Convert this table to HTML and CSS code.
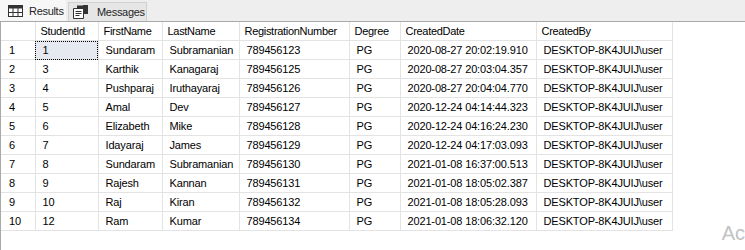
FILE: index.html
```html
<!DOCTYPE html>
<html lang="en">
<head>
    <meta charset="UTF-8">
    <title>Results</title>
    <link rel="stylesheet" href="styles.css">
</head>
<body>
    <div class="tabs">
        <div class="tab active">
            <svg width="15" height="12" viewBox="0 0 15 12">
                <rect x="0.5" y="0.5" width="14" height="11" fill="#fff" stroke="#333"/>
                <rect x="0.5" y="0.5" width="14" height="3" fill="#333"/>
                <path d="M5 0.5V11.5M10 0.5V11.5M0.5 7.5H14.5" stroke="#333" fill="none"/>
            </svg>
            <span>Results</span>
        </div>
        <div class="tab">
            <svg width="16" height="14" viewBox="0 0 16 14">
                <path d="M0.5 3.5H10.5V13.5H0.5Z" fill="#fff" stroke="#333"/>
                <path d="M2.5 6.5H8.5M2.5 8.5H8.5M2.5 10.5H6.5" stroke="#333"/>
                <rect x="10" y="0" width="5" height="9" fill="#333"/>
                <rect x="4" y="0.5" width="6" height="3" fill="#333"/>
            </svg>
            <span>Messages</span>
        </div>
    </div>
    <div class="grid">
        <table>
            <colgroup>
                <col style="width:34px">
                <col style="width:63px">
                <col style="width:64px">
                <col style="width:77px">
                <col style="width:110px">
                <col style="width:51px">
                <col style="width:136px">
                <col style="width:136px">
            </colgroup>
            <thead>
                <tr>
                    <th></th><th>StudentId</th><th>FirstName</th><th>LastName</th><th>RegistrationNumber</th><th>Degree</th><th>CreatedDate</th><th>CreatedBy</th>
                </tr>
            </thead>
            <tbody id="rows"></tbody>
        </table>
        <div class="watermark">Ac</div>
    </div>

    <script>
        const data = [
            [1, 'Sundaram', 'Subramanian', '789456123', '2020-08-27 20:02:19.910'],
            [3, 'Karthik', 'Kanagaraj', '789456125', '2020-08-27 20:03:04.357'],
            [4, 'Pushparaj', 'Iruthayaraj', '789456126', '2020-08-27 20:04:04.770'],
            [5, 'Amal', 'Dev', '789456127', '2020-12-24 04:14:44.323'],
            [6, 'Elizabeth', 'Mike', '789456128', '2020-12-24 04:16:24.230'],
            [7, 'Idayaraj', 'James', '789456129', '2020-12-24 04:17:03.093'],
            [8, 'Sundaram', 'Subramanian', '789456130', '2021-01-08 16:37:00.513'],
            [9, 'Rajesh', 'Kannan', '789456131', '2021-01-08 18:05:02.387'],
            [10, 'Raj', 'Kiran', '789456132', '2021-01-08 18:05:28.093'],
            [12, 'Ram', 'Kumar', '789456134', '2021-01-08 18:06:32.120']
        ];
        const tbody = document.getElementById('rows');
        data.forEach((r, i) => {
            const tr = document.createElement('tr');
            tr.innerHTML = `
                <td class="num">${i + 1}</td>
                <td class="${i === 0 ? 'selected' : ''}">${r[0]}</td>
                <td>${r[1]}</td>
                <td>${r[2]}</td>
                <td>${r[3]}</td>
                <td>PG</td>
                <td>${r[4]}</td>
                <td>DESKTOP-8K4JUIJ\\user</td>
            `;
            tbody.appendChild(tr);
        });
    </script>
</body>
</html>
```

FILE: styles.css
```css
body {
    margin: 0;
    font-family: 'Liberation Sans', Arial, sans-serif;
    font-size: 11px;
    color: #000;
    background: #fff;
    width: 745px;
    height: 250px;
    overflow: hidden;
}
.tabs {
    display: flex;
    align-items: flex-end;
    height: 22px;
    background: #eeeeee;
    border-bottom: 1px solid #a9a9a9;
    box-sizing: border-box;
}
.tab {
    display: flex;
    align-items: center;
    gap: 8px;
    flex: none;
    box-sizing: border-box;
    width: 79px;
    height: 19px;
    padding-left: 4px;
    margin-left: 2px;
    font-size: 11px;
    letter-spacing: -0.3px;
    color: #1e1e1e;
    background: #e6e6e6;
    border: 1px solid #d2d2d2;
    border-bottom: none;
    white-space: nowrap;
}
.tab.active {
    width: 66px;
    height: 21px;
    margin-left: 0;
    padding-left: 7px;
    gap: 6px;
    background: #f7f7f7;
    border-color: #f7f7f7;
}
.tab svg {
    flex: none;
}
.grid {
    position: relative;
    height: 228px;
    border-left: 1px solid #a9a9a9;
}
table {
    border-collapse: collapse;
    table-layout: fixed;
    width: 671px;
}
th, td {
    height: 18px;
    border: 1px solid #e3e3e3;
    text-align: left;
    font-weight: normal;
    white-space: nowrap;
    overflow: hidden;
}
th {
    padding: 0 0 0 5px;
    letter-spacing: -0.3px;
}
td {
    padding: 0 0 0 7px;
    letter-spacing: -0.15px;
}
tr > :first-child {
    border-left: none;
}
thead th {
    border-top: none;
}
td.num {
    padding-left: 8px;
}
td.selected {
    background: #e6eaf0;
    outline: 1px dotted #000;
    outline-offset: -1px;
}
.watermark {
    position: absolute;
    right: 0;
    top: 200px;
    font-size: 20px;
    color: #c2c2c2;
}
```
